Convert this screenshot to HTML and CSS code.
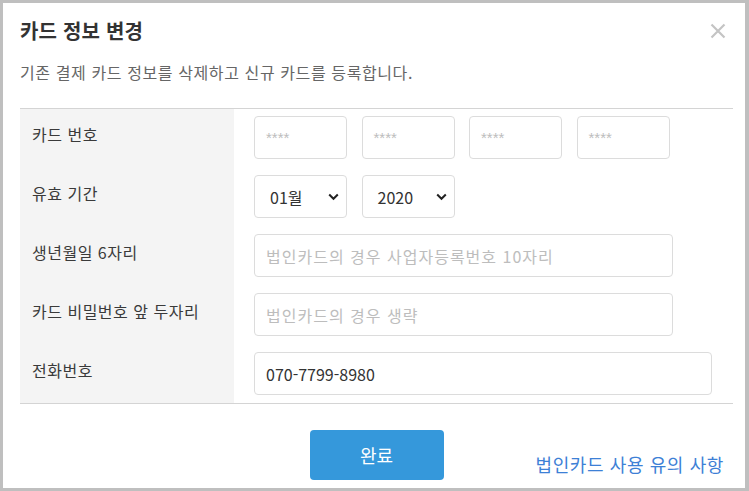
FILE: index.html
```html
<!DOCTYPE html>
<html lang="ko">
<head>
<meta charset="utf-8">
<title>카드 정보 변경</title>
<link rel="stylesheet" href="styles.css">
</head>
<body>
<div class="modal">
  <div class="header">
    <h1 class="title">카드 정보 변경</h1>
    <button class="close" aria-label="닫기">
      <svg width="16" height="16" viewBox="0 0 16 16"><path d="M1.5 1.5 L14.5 14.5 M14.5 1.5 L1.5 14.5" stroke="#c4c4c4" stroke-width="2.2" fill="none"/></svg>
    </button>
  </div>
  <p class="subtitle">기존 결제 카드 정보를 삭제하고 신규 카드를 등록합니다.</p>

  <div class="form">
    <div class="label">카드 번호</div>
    <div class="field first">
      <div class="input w-card placeholder stars">****</div>
      <div class="input w-card placeholder stars">****</div>
      <div class="input w-card placeholder stars">****</div>
      <div class="input w-card placeholder stars">****</div>
    </div>

    <div class="label">유효 기간</div>
    <div class="field">
      <div class="input w-card select"><span>01월</span><svg width="11" height="8" viewBox="0 0 11 8"><path d="M1.2 1.5 L5.5 5.8 L9.8 1.5" stroke="#222" stroke-width="2" fill="none"/></svg></div>
      <div class="input w-card select"><span>2020</span><svg width="11" height="8" viewBox="0 0 11 8"><path d="M1.2 1.5 L5.5 5.8 L9.8 1.5" stroke="#222" stroke-width="2" fill="none"/></svg></div>
    </div>

    <div class="label">생년월일 6자리</div>
    <div class="field">
      <div class="input w-long placeholder">법인카드의 경우 사업자등록번호 10자리</div>
    </div>

    <div class="label">카드 비밀번호 앞 두자리</div>
    <div class="field">
      <div class="input w-long placeholder">법인카드의 경우 생략</div>
    </div>

    <div class="label">전화번호</div>
    <div class="field last">
      <div class="input w-phone">070-7799-8980</div>
    </div>
  </div>

  <div class="footer">
    <button class="submit">완료</button>
    <a class="notice" href="#">법인카드 사용 유의 사항</a>
  </div>
</div>
</body>
</html>
```

FILE: styles.css
```css
* { box-sizing: border-box; }
html, body { margin: 0; padding: 0; }
body {
  font-family: "Noto Sans CJK KR", "Noto Sans", sans-serif;
  background: #fff;
}
.modal {
  width: 749px;
  height: 491px;
  border: 3px solid #bfbfbf;
  border-right-width: 4px;
  background: #fff;
  padding: 14px 12px 0 17px;
}
.header {
  display: flex;
  justify-content: space-between;
  align-items: flex-start;
}
.title {
  margin: 0;
  font-size: 20px;
  line-height: 28px;
  font-weight: 700;
  color: #333;
  letter-spacing: 0.2px;
}
.close {
  border: 0;
  background: none;
  padding: 0;
  margin: 6px 7px 0 0;
  width: 16px;
  height: 16px;
  display: flex;
}
.subtitle {
  margin: 15px 0 0;
  font-size: 16px;
  line-height: 24px;
  color: #666;
  letter-spacing: 0.6px;
}
.form {
  margin-top: 24px;
  display: grid;
  grid-template-columns: 214px 1fr;
  border-top: 1px solid #d4d4d4;
  border-bottom: 1px solid #d4d4d4;
}
.label {
  background: #f4f4f4;
  padding: 13px 0 0 12px;
  font-size: 16px;
  line-height: 24px;
  color: #3a3a3a;
  letter-spacing: 0.5px;
}
.field {
  display: flex;
  gap: 14.5px;
  padding: 7px 0 9px 20px;
}
.field.last { padding-bottom: 8px; }
.input {
  height: 43px;
  border: 1px solid #dcdcdc;
  border-radius: 4px;
  padding: 0 11px;
  display: flex;
  align-items: center;
  font-size: 16px;
  color: #333;
  white-space: nowrap;
}
.placeholder { color: #bdbdbd; font-size: 16px; letter-spacing: 1px; }
.stars { font-size: 15px; letter-spacing: 0; font-family: "Liberation Sans", sans-serif; }
.w-card { width: 93px; }
.w-long { width: 419px; }
.w-phone { width: 458px; }
.select {
  padding: 0 7px 0 15px;
  justify-content: space-between;
}
.footer {
  display: grid;
  grid-template-columns: 1fr auto 1fr;
  padding-top: 26px;
}
.submit {
  grid-column: 2;
  width: 134px;
  height: 50px;
  border: 0;
  border-radius: 4px;
  background: #3598db;
  color: #fff;
  font-family: inherit;
  font-size: 18px;
}
.notice {
  grid-column: 3;
  justify-self: end;
  align-self: end;
  margin: 0 9px 4px 0;
  font-size: 18px;
  line-height: 24px;
  color: #3d80d6;
  text-decoration: none;
  letter-spacing: 0.6px;
}
```
